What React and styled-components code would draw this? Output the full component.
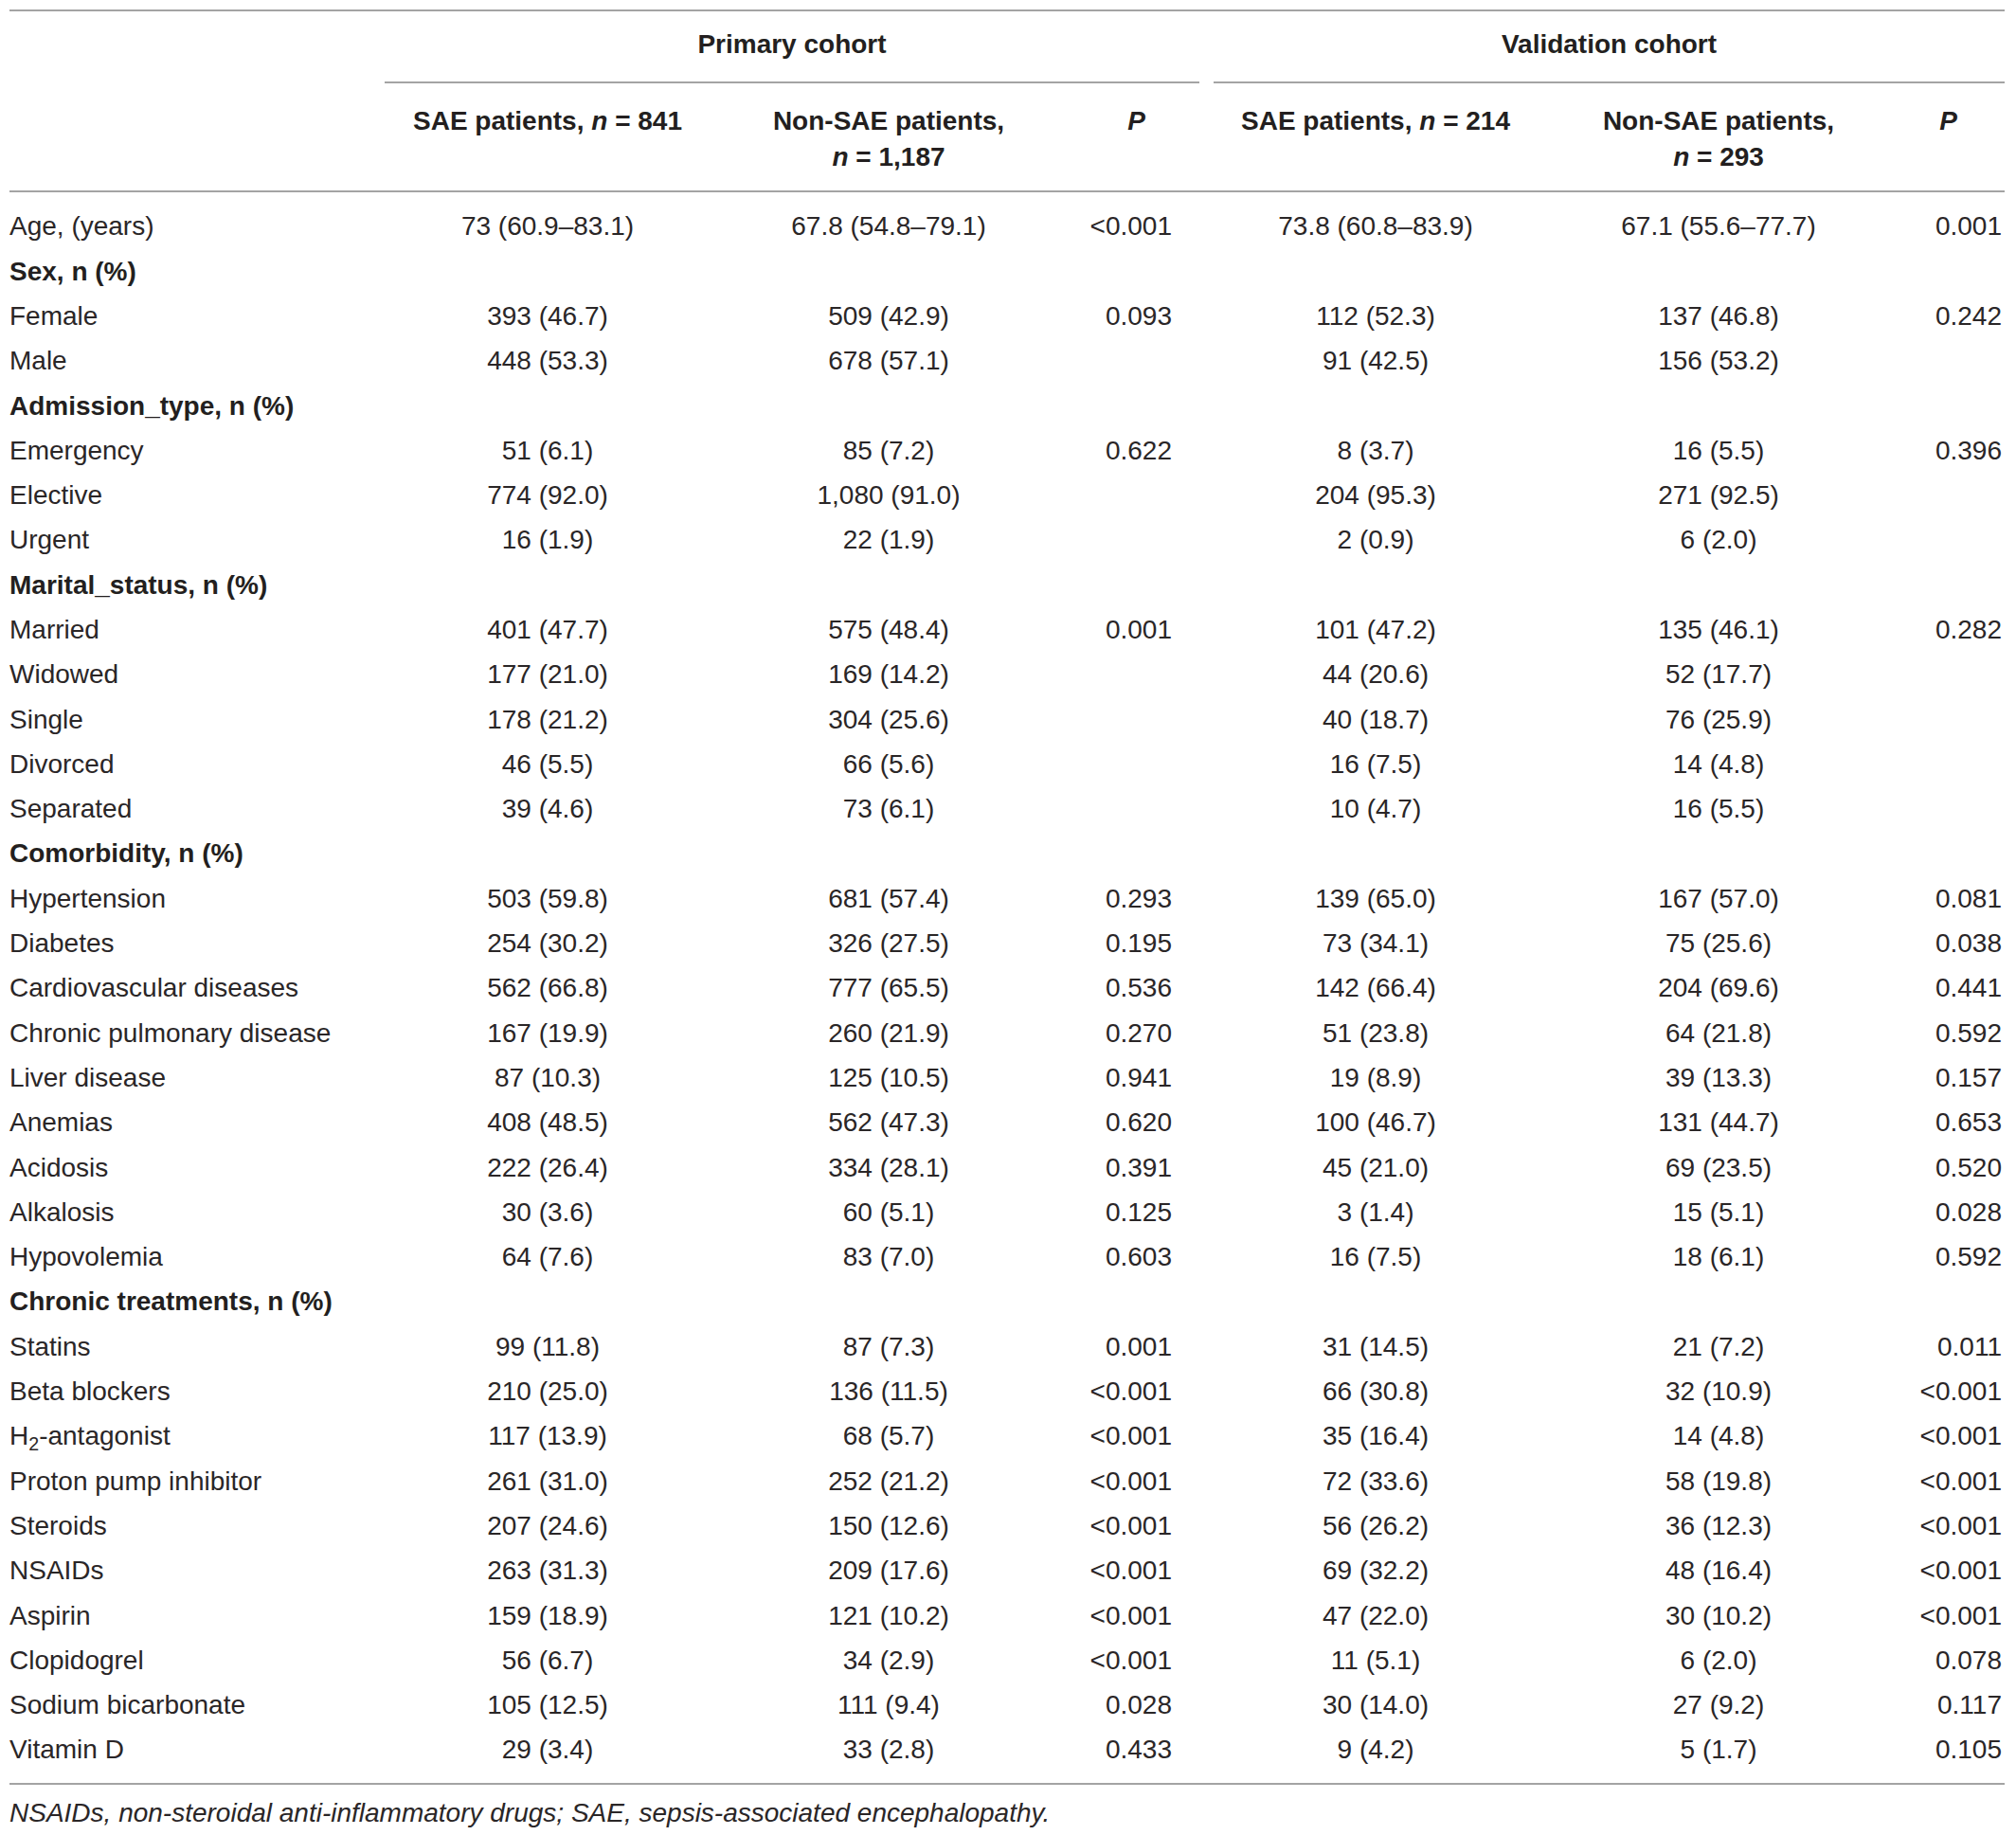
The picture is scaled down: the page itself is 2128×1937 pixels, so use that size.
import React from "react";
import styled, { createGlobalStyle } from "styled-components";

const GlobalStyle = createGlobalStyle`
  html, body {
    margin: 0;
    padding: 0;
    background: #ffffff;
  }
`;

const COLS = "396px 344px 376px 147px 358px 366px 119px";
const RULE = "2px solid #a4a4a4";

const Wrapper = styled.div`
  padding: 10px 0 0 10px;
  width: 2106px;
  font-family: "Liberation Sans", Arial, Helvetica, sans-serif;
  font-size: 28px;
  color: #2a2627;
`;

const Table = styled.div`
  border-top: ${RULE};
`;

const GridRow = styled.div`
  display: grid;
  grid-template-columns: ${COLS};
`;

const CohortCell = styled.div`
  grid-column: span 3;
  text-align: center;
  font-weight: 700;
  color: #231f20;
  line-height: 38px;
  padding: 15.7px 0 20.3px;
  border-bottom: ${RULE};
  margin-left: ${(p) => p.$ml || 0}px;
  margin-right: ${(p) => p.$mr || 0}px;
`;

const HeadRow = styled(GridRow)`
  border-bottom: ${RULE};
`;

const HeadCell = styled.div`
  text-align: center;
  font-weight: 700;
  color: #231f20;
  line-height: 38px;
  padding: 21px 0 16px;
`;

const Body = styled.div`
  padding: 12.35px 0 11.15px;
  border-bottom: ${RULE};
`;

const DataRow = styled(GridRow)`
  line-height: 47.3px;
  height: 47.3px;
`;

const Label = styled.div`
  font-weight: ${(p) => (p.$section ? 700 : 400)};
  color: ${(p) => (p.$section ? "#231f20" : "inherit")};
  white-space: nowrap;
`;

const Value = styled.div`
  white-space: nowrap;
  text-align: ${(p) => (p.$p ? "right" : "center")};
  padding-right: ${(p) => (p.$p ? p.$pad : 0)}px;
`;

const Sub = styled.sub`
  font-size: 0.7em;
  vertical-align: -0.32em;
  line-height: 0;
`;

const Footnote = styled.div`
  margin-top: 11px;
  line-height: 38px;
  font-style: italic;
`;

const sec = (label) => ({ label, section: true });
const row = (label, ...v) => ({ label, v });

const rows = [
  row("Age, (years)", "73 (60.9–83.1)", "67.8 (54.8–79.1)", "<0.001", "73.8 (60.8–83.9)", "67.1 (55.6–77.7)", "0.001"),
  sec("Sex, n (%)"),
  row("Female", "393 (46.7)", "509 (42.9)", "0.093", "112 (52.3)", "137 (46.8)", "0.242"),
  row("Male", "448 (53.3)", "678 (57.1)", "", "91 (42.5)", "156 (53.2)", ""),
  sec("Admission_type, n (%)"),
  row("Emergency", "51 (6.1)", "85 (7.2)", "0.622", "8 (3.7)", "16 (5.5)", "0.396"),
  row("Elective", "774 (92.0)", "1,080 (91.0)", "", "204 (95.3)", "271 (92.5)", ""),
  row("Urgent", "16 (1.9)", "22 (1.9)", "", "2 (0.9)", "6 (2.0)", ""),
  sec("Marital_status, n (%)"),
  row("Married", "401 (47.7)", "575 (48.4)", "0.001", "101 (47.2)", "135 (46.1)", "0.282"),
  row("Widowed", "177 (21.0)", "169 (14.2)", "", "44 (20.6)", "52 (17.7)", ""),
  row("Single", "178 (21.2)", "304 (25.6)", "", "40 (18.7)", "76 (25.9)", ""),
  row("Divorced", "46 (5.5)", "66 (5.6)", "", "16 (7.5)", "14 (4.8)", ""),
  row("Separated", "39 (4.6)", "73 (6.1)", "", "10 (4.7)", "16 (5.5)", ""),
  sec("Comorbidity, n (%)"),
  row("Hypertension", "503 (59.8)", "681 (57.4)", "0.293", "139 (65.0)", "167 (57.0)", "0.081"),
  row("Diabetes", "254 (30.2)", "326 (27.5)", "0.195", "73 (34.1)", "75 (25.6)", "0.038"),
  row("Cardiovascular diseases", "562 (66.8)", "777 (65.5)", "0.536", "142 (66.4)", "204 (69.6)", "0.441"),
  row("Chronic pulmonary disease", "167 (19.9)", "260 (21.9)", "0.270", "51 (23.8)", "64 (21.8)", "0.592"),
  row("Liver disease", "87 (10.3)", "125 (10.5)", "0.941", "19 (8.9)", "39 (13.3)", "0.157"),
  row("Anemias", "408 (48.5)", "562 (47.3)", "0.620", "100 (46.7)", "131 (44.7)", "0.653"),
  row("Acidosis", "222 (26.4)", "334 (28.1)", "0.391", "45 (21.0)", "69 (23.5)", "0.520"),
  row("Alkalosis", "30 (3.6)", "60 (5.1)", "0.125", "3 (1.4)", "15 (5.1)", "0.028"),
  row("Hypovolemia", "64 (7.6)", "83 (7.0)", "0.603", "16 (7.5)", "18 (6.1)", "0.592"),
  sec("Chronic treatments, n (%)"),
  row("Statins", "99 (11.8)", "87 (7.3)", "0.001", "31 (14.5)", "21 (7.2)", "0.011"),
  row("Beta blockers", "210 (25.0)", "136 (11.5)", "<0.001", "66 (30.8)", "32 (10.9)", "<0.001"),
  row(<>H<Sub>2</Sub>-antagonist</>, "117 (13.9)", "68 (5.7)", "<0.001", "35 (16.4)", "14 (4.8)", "<0.001"),
  row("Proton pump inhibitor", "261 (31.0)", "252 (21.2)", "<0.001", "72 (33.6)", "58 (19.8)", "<0.001"),
  row("Steroids", "207 (24.6)", "150 (12.6)", "<0.001", "56 (26.2)", "36 (12.3)", "<0.001"),
  row("NSAIDs", "263 (31.3)", "209 (17.6)", "<0.001", "69 (32.2)", "48 (16.4)", "<0.001"),
  row("Aspirin", "159 (18.9)", "121 (10.2)", "<0.001", "47 (22.0)", "30 (10.2)", "<0.001"),
  row("Clopidogrel", "56 (6.7)", "34 (2.9)", "<0.001", "11 (5.1)", "6 (2.0)", "0.078"),
  row("Sodium bicarbonate", "105 (12.5)", "111 (9.4)", "0.028", "30 (14.0)", "27 (9.2)", "0.117"),
  row("Vitamin D", "29 (3.4)", "33 (2.8)", "0.433", "9 (4.2)", "5 (1.7)", "0.105"),
];

// right padding of the two P columns
const P_PAD = { 2: 36, 5: 3 };

const App = () => {
  return (
    <Wrapper>
      <GlobalStyle />
      <Table>
        <GridRow>
          <div />
          <CohortCell $mr={7}>Primary cohort</CohortCell>
          <CohortCell $ml={8}>Validation cohort</CohortCell>
        </GridRow>
        <HeadRow>
          <div />
          <HeadCell>SAE patients, <i>n</i> = 841</HeadCell>
          <HeadCell>Non-SAE patients,<br /><i>n</i> = 1,187</HeadCell>
          <HeadCell><i>P</i></HeadCell>
          <HeadCell>SAE patients, <i>n</i> = 214</HeadCell>
          <HeadCell>Non-SAE patients,<br /><i>n</i> = 293</HeadCell>
          <HeadCell><i>P</i></HeadCell>
        </HeadRow>
        <Body>
          {rows.map((r, i) => (
            <DataRow key={i}>
              <Label $section={r.section}>{r.label}</Label>
              {(r.v || ["", "", "", "", "", ""]).map((val, j) => (
                <Value key={j} $p={j in P_PAD} $pad={P_PAD[j]}>
                  {val}
                </Value>
              ))}
            </DataRow>
          ))}
        </Body>
      </Table>
      <Footnote>
        NSAIDs, non-steroidal anti-inflammatory drugs; SAE, sepsis-associated encephalopathy.
      </Footnote>
    </Wrapper>
  );
};

export default App;
